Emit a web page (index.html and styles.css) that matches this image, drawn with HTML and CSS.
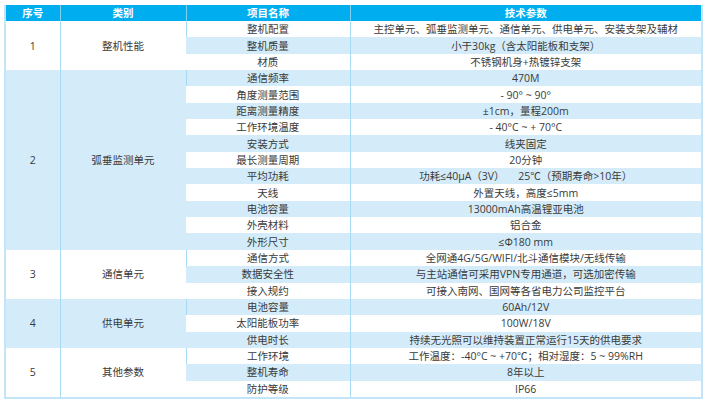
FILE: index.html
```html
<!DOCTYPE html>
<html lang="zh">
<head>
<meta charset="utf-8">
<title>技术参数</title>
<link rel="stylesheet" href="styles.css">
</head>
<body>
<table class="spec">
  <colgroup>
    <col class="c-no">
    <col class="c-cat">
    <col class="c-item">
    <col class="c-val">
  </colgroup>
  <thead>
    <tr><th>序号</th><th>类别</th><th>项目名称</th><th>技术参数</th></tr>
  </thead>
  <tbody>
    <tr><td rowspan="3" class="grp">1</td><td rowspan="3" class="grp">整机性能</td><td>整机配置</td><td>主控单元、弧垂监测单元、通信单元、供电单元、安装支架及辅材</td></tr>
    <tr class="alt"><td>整机质量</td><td>小于30kg（含太阳能板和支架）</td></tr>
    <tr><td>材质</td><td>不锈钢机身+热镀锌支架</td></tr>

    <tr class="alt"><td rowspan="11" class="grp alt-cell">2</td><td rowspan="11" class="grp alt-cell">弧垂监测单元</td><td>通信频率</td><td>470M</td></tr>
    <tr><td>角度测量范围</td><td>- 90° ~ 90°</td></tr>
    <tr class="alt"><td>距离测量精度</td><td>±1cm，量程200m</td></tr>
    <tr><td>工作环境温度</td><td>- 40°C ~ + 70°C</td></tr>
    <tr class="alt"><td>安装方式</td><td>线夹固定</td></tr>
    <tr><td>最长测量周期</td><td>20分钟</td></tr>
    <tr class="alt"><td>平均功耗</td><td class="pre">功耗≤40μA（3V）     25℃（预期寿命&gt;10年）</td></tr>
    <tr><td>天线</td><td>外置天线，高度≤5mm</td></tr>
    <tr class="alt"><td>电池容量</td><td>13000mAh高温锂亚电池</td></tr>
    <tr><td>外壳材料</td><td>铝合金</td></tr>
    <tr class="alt"><td>外形尺寸</td><td>≤Φ180 mm</td></tr>

    <tr><td rowspan="3" class="grp">3</td><td rowspan="3" class="grp">通信单元</td><td>通信方式</td><td>全网通4G/5G/WIFI/北斗通信模块/无线传输</td></tr>
    <tr class="alt"><td>数据安全性</td><td>与主站通信可采用VPN专用通道，可选加密传输</td></tr>
    <tr><td>接入规约</td><td>可接入南网、国网等各省电力公司监控平台</td></tr>

    <tr class="alt"><td rowspan="3" class="grp alt-cell">4</td><td rowspan="3" class="grp alt-cell">供电单元</td><td>电池容量</td><td>60Ah/12V</td></tr>
    <tr><td>太阳能板功率</td><td>100W/18V</td></tr>
    <tr class="alt"><td>供电时长</td><td>持续无光照可以维持装置正常运行15天的供电要求</td></tr>

    <tr><td rowspan="3" class="grp">5</td><td rowspan="3" class="grp">其他参数</td><td>工作环境</td><td>工作温度：-40°C ~ +70℃；相对湿度：5 ~ 99%RH</td></tr>
    <tr class="alt"><td>整机寿命</td><td>8年以上</td></tr>
    <tr><td>防护等级</td><td>IP66</td></tr>
  </tbody>
</table>
</body>
</html>
```

FILE: styles.css
```css
html, body {
  margin: 0;
  padding: 0;
  background: #ffffff;
}

body {
  padding: 5px 0 0 4px;
  font-family: "Open Sans", "Noto Sans CJK SC", sans-serif;
  font-size: 10.5px;
  color: #3a3a3a;
}

.spec {
  border-collapse: collapse;
  table-layout: fixed;
  width: 697px;
  border-left: 2px solid #c3e5f8;
  border-right: 2px solid #c3e5f8;
  border-bottom: 2px solid #c3e5f8;
}

.c-no { width: 55px; }
.c-cat { width: 126px; }
.c-item { width: 164px; }
.c-val { width: 352px; }

.spec th {
  height: 16px;
  padding: 0;
  background: #00aeef;
  color: #ffffff;
  font-weight: 700;
  font-size: 10.5px;
  line-height: 14px;
  text-align: center;
  border-left: 1px solid #7fd0f2;
}

.spec th:first-child { border-left: 0; }

.spec td {
  height: 16.35px;
  padding: 0;
  line-height: 14px;
  text-align: center;
  vertical-align: middle;
  white-space: nowrap;
  border-left: 1px solid #a6daf5;
  background: #ffffff;
}

.spec tbody tr {
  height: 16.35px;
}

.spec tr.alt td {
  background: #d4ecf9;
}

.spec td.grp {
  background: #ffffff;
}

.spec tr.alt td.grp.alt-cell,
.spec td.grp.alt-cell {
  background: #d4ecf9;
}

.spec tr.alt td.grp:not(.alt-cell) {
  background: #ffffff;
}

.spec td:first-child { border-left: 0; }

.spec td.pre {
  white-space: pre;
}
```
